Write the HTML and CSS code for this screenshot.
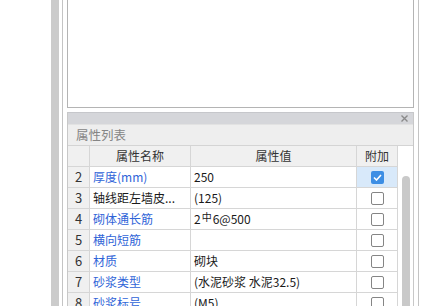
FILE: index.html
```html
<!DOCTYPE html>
<html>
<head>
<meta charset="utf-8">
<link rel="stylesheet" href="styles.css">
</head>
<body>
<div class="side-blank"></div>
<div class="side-bar"></div>
<div class="side-gap"></div>
<div class="frame">
  <div class="top-panel"></div>
  <div class="prop-panel">
    <div class="title-bar">
      <svg class="close" width="7" height="7" viewBox="0 0 7 7"><path d="M0.5 0.5 L6.5 6.5 M6.5 0.5 L0.5 6.5" stroke="#8a8a8a" stroke-width="1.4"/></svg>
    </div>
    <div class="caption">属性列表</div>
    <div class="table-wrap">
      <div class="grid">
        <div class="c num head"></div><div class="c name head">属性名称</div><div class="c val head">属性值</div><div class="c add head">附加</div>
        <div class="c num">2</div><div class="c name blue">厚度(mm)</div><div class="c val">250</div><div class="c add sel"><span class="cb on"><svg width="9" height="7" viewBox="0 0 9 7"><path d="M1 3.5 L3.5 6 L8 1" fill="none" stroke="#fff" stroke-width="1.6"/></svg></span></div>
        <div class="c num">3</div><div class="c name">轴线距左墙皮...</div><div class="c val">(125)</div><div class="c add"><span class="cb"></span></div>
        <div class="c num">4</div><div class="c name blue">砌体通长筋</div><div class="c val">2<span class="rebar">中</span>6@500</div><div class="c add"><span class="cb"></span></div>
        <div class="c num">5</div><div class="c name blue">横向短筋</div><div class="c val"></div><div class="c add"><span class="cb"></span></div>
        <div class="c num">6</div><div class="c name blue">材质</div><div class="c val">砌块</div><div class="c add"><span class="cb"></span></div>
        <div class="c num">7</div><div class="c name blue">砂浆类型</div><div class="c val">(水泥砂浆 水泥32.5)</div><div class="c add"><span class="cb"></span></div>
        <div class="c num">8</div><div class="c name blue">砂浆标号</div><div class="c val">(M5)</div><div class="c add"><span class="cb"></span></div>
      </div>
      <div class="scroll">
        <div class="thumb"></div>
      </div>
    </div>
  </div>
</div>
</body>
</html>
```
FILE: styles.css
```css
html, body {
  margin: 0;
  padding: 0;
  background: #fff;
}
body {
  display: flex;
  height: 306px;
  overflow: hidden;
  font-family: "Noto Sans CJK SC", "Noto Sans", sans-serif;
  font-size: 12px;
  color: #1a1a1a;
}
.side-blank { width: 51px; flex: none; }
.side-bar { width: 8px; flex: none; background: #cbcbcb; }
.side-gap { width: 3px; flex: none; }
.frame {
  flex: none;
  width: 347px;
  padding: 0 4px;
  border-left: 1px solid #c4c4c4;
  border-right: 1px solid #c4c4c4;
  display: flex;
  flex-direction: column;
}
.top-panel {
  height: 107px;
  flex: none;
  border: 1px solid #b4b4b4;
  border-top: none;
  background: #fff;
}
.prop-panel {
  margin-top: 4px;
  flex: 1;
  border-left: 1px solid #c8c8c8;
  border-right: 1px solid #c8c8c8;
  display: flex;
  flex-direction: column;
  min-height: 0;
}
.title-bar {
  height: 11px;
  flex: none;
  background: #d5d6da;
  border-top: 1px solid #c6c7cb;
  display: flex;
  justify-content: flex-end;
  align-items: center;
  padding-right: 5px;
}
.caption {
  height: 20px;
  flex: none;
  background: #eeeeee;
  border-bottom: 1px solid #d4d4d4;
  color: #858585;
  font-size: 12.5px;
  line-height: 20px;
  padding-left: 8px;
  border-top: 1px solid #e2e2e2;
}
.table-wrap {
  display: flex;
  flex: 1;
  min-height: 0;
}
.grid {
  display: grid;
  grid-template-columns: 22px 101px 166px 41px;
  grid-auto-rows: 21px;
  align-content: start;
}
.c {
  box-sizing: border-box;
  border-right: 1px solid #d6d6d6;
  border-bottom: 1px solid #d6d6d6;
  line-height: 20px;
  white-space: nowrap;
  overflow: hidden;
  padding-left: 3px;
}
.head {
  background: #f0f0f0;
  text-align: center;
  padding-left: 0;
  color: #333;
}
.num {
  background: #f0f0f0;
  text-align: center;
  padding-left: 0;
  color: #333;
  font-size: 13px;
}
.blue { color: #2f64d8; }
.add {
  display: flex;
  align-items: center;
  justify-content: center;
  padding-left: 0;
}
.add.head { display: block; }
.sel { background: #d8e9fa; }
.cb {
  width: 11px;
  height: 11px;
  border: 1px solid #858585;
  border-radius: 2px;
  background: #fff;
  display: flex;
  align-items: center;
  justify-content: center;
}
.cb.on {
  width: 13px;
  height: 13px;
  border: none;
  background: #3d8ee4;
}
.rebar {
  font-size: 10px;
  position: relative;
  top: -3px;
  margin: 0 1px;
}
.scroll {
  width: 15px;
  flex: none;
  background: #fff;
  position: relative;
}
.thumb {
  position: absolute;
  left: 4px;
  width: 8px;
  top: 30px;
  bottom: 0;
  background: #c9c9c9;
  border-radius: 4px 4px 0 0;
}
```
